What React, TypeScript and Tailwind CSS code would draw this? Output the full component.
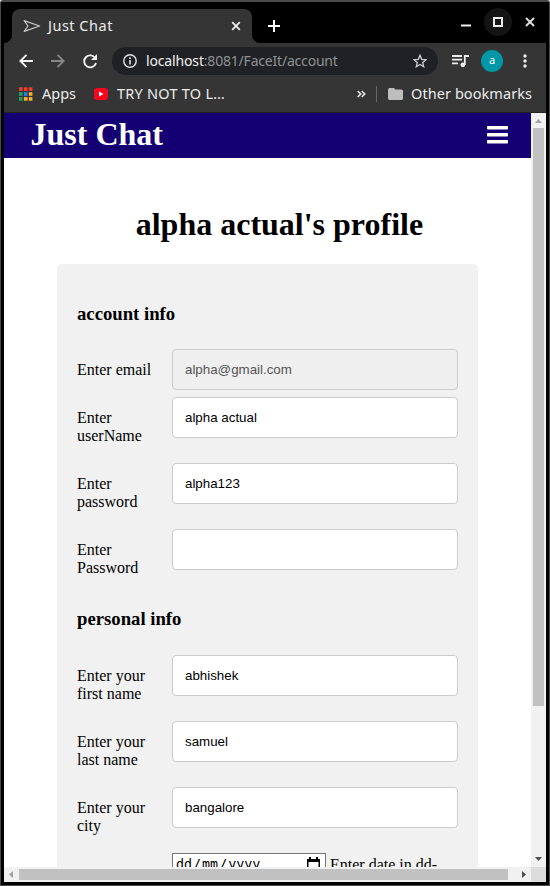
import React from "react";

const ui = "font-['Noto_Sans',sans-serif]";

function Field({ label, value, disabled }: { label: string[]; value: string; disabled?: boolean }) {
  return (
    <div className="flex pb-[6px]">
      <label className="w-[95px] shrink-0 py-3">
        {label.map((l) => (
          <span key={l} className="block whitespace-nowrap">{l}</span>
        ))}
      </label>
      <input
        readOnly
        disabled={disabled}
        defaultValue={value}
        className="h-[41px] w-[286px] rounded-[4px] border border-[#ccc] bg-white px-3 font-['Liberation_Sans',sans-serif] text-[13.333px] text-black outline-none disabled:bg-[#efefef] disabled:text-[#545454]"
      />
    </div>
  );
}

function TabStrip() {
  return (
    <div className="flex h-[41px] shrink-0 bg-black">
      <div className="flex w-2 items-end bg-[#353535]">
        <div className="h-full w-full rounded-br-[8px] bg-black" />
      </div>
      <div className="mt-[7px] flex w-[240px] items-center rounded-t-[8px] bg-[#353535] pl-[11px] pr-[11px]">
        <svg width="18" height="14" viewBox="0 0 18 14" fill="none" stroke="#c8c8c8" strokeWidth="1.2" strokeLinejoin="round">
          <path d="M1.200 1.600 16.600 7 1.200 12.400 5 7Z" />
        </svg>
        <span className="ml-[7px] flex-1 whitespace-nowrap text-[14.500px] tracking-[0.5px] text-[#ececec]">Just Chat</span>
        <svg width="10" height="10" viewBox="0 0 10 10" stroke="#eee" strokeWidth="1.8">
          <path d="m1.2 1.2 7.6 7.6m0-7.6-7.6 7.6" />
        </svg>
      </div>
      <div className="flex w-2 items-end bg-[#353535]">
        <div className="h-full w-full rounded-bl-[8px] bg-black" />
      </div>
      <svg className="ml-2 mt-[18px]" width="12" height="12" stroke="#fff" strokeWidth="2">
        <path d="M6 0v12M0 6h12" />
      </svg>
      <div className="flex flex-1 justify-end pr-[10px] pt-[6px]">
        <svg width="76" height="28" viewBox="0 0 76 28" fill="none">
          <path d="M1 17.5h10" stroke="#eee" strokeWidth="2" />
          <circle cx="38" cy="14" r="14" fill="#141414" />
          <rect x="34" y="10" width="8" height="8" stroke="#eee" strokeWidth="2" />
          <path d="m66 10 8 8m0-8-8 8" stroke="#ddd" strokeWidth="2" />
        </svg>
      </div>
    </div>
  );
}

function Toolbar() {
  return (
    <div className="flex h-[35px] shrink-0 items-center pt-px">
      <svg className="ml-[15px] shrink-0" width="79" height="16" viewBox="0 0 79 16" fill="none" strokeWidth="1.9">
        <path d="M14 8H1.5M7.5 1.8 1.4 8l6.1 6.2" stroke="#f4f4f4" />
        <path d="M32 8h12.500M38.500 1.800 44.600 8l-6.100 6.200" stroke="#868686" />
        <path d="M76.500 5.500A6 6 0 1 0 77 10" stroke="#f4f4f4" />
        <path d="M78 1v6h-6z" fill="#f4f4f4" />
      </svg>
      <div className="ml-[14px] flex h-[28px] w-[326px] items-center rounded-full bg-[#202124] pl-[11px] pr-[11px]">
        <svg width="14" height="14" viewBox="0 0 14 14" fill="none" stroke="#e4e4e4">
          <circle cx="7" cy="7" r="6.200" strokeWidth="1.400" />
          <path d="M7 6v4.500M7 3.200v1.800" strokeWidth="1.600" />
        </svg>
        <span className="ml-[9px] flex-1 whitespace-nowrap pb-px text-[14px] text-[#8f9194]">
          <span className="tracking-[-0.15px] text-[#f0f0f0]">localhost</span>
          <span className="tracking-[-0.2px]">:8081/FaceIt/account</span>
        </span>
        <svg width="14" height="14" viewBox="0 0 14 14" fill="none" stroke="#d0d0d0" strokeWidth="1.300">
          <path d="m7 1.300 1.700 4 4.300.4-3.300 2.800 1 4.200L7 10.500l-3.700 2.200 1-4.200L1 5.700l4.300-.4Z" />
        </svg>
      </div>
      <svg className="ml-[14px]" width="17" height="14" viewBox="0 0 17 14" fill="none" stroke="#eee" strokeWidth="1.800">
        <path d="M0 2h10M0 5.700h10M0 9.400h6M12.800 11V2H17" />
        <circle cx="10.900" cy="10.800" r="2.400" fill="#eee" stroke="none" />
      </svg>
      <div className="ml-[12px] flex size-[22px] items-center justify-center rounded-full bg-[#0097a7] pb-px text-[11px] text-white">a</div>
      <svg className="ml-[20px]" width="4" height="14" fill="#eee">
        <circle cx="2" cy="2" r="1.700" /><circle cx="2" cy="7" r="1.700" /><circle cx="2" cy="12" r="1.700" />
      </svg>
    </div>
  );
}

const appColors = ["#f33b32", "#f33b32", "#f33b32", "#1da462", "#1e88f5", "#fbb32c", "#1da462", "#fbb32c", "#fbb32c"];

function Bookmarks() {
  return (
    <div className="flex h-[35px] shrink-0 items-center whitespace-nowrap border-b border-[#222] pb-[2px] text-[14.500px] text-[#ececec]">
      <svg className="ml-[15px]" width="14" height="14">
        {appColors.map((c, i) => <rect key={i} x={(i % 3) * 4.9} y={Math.floor(i / 3) * 4.9 + 0.3} width="3.600" height="3.600" fill={c} />)}
      </svg>
      <span className="ml-[9px] w-[35px]">Apps</span>
      <svg className="ml-[17px]" width="14" height="12" viewBox="0 0 14 12">
        <rect width="14" height="12" rx="3" fill="#f6061d" /><path d="M5 3.500v5L9.500 6Z" fill="#fff" />
      </svg>
      <span className="ml-[9px] tracking-[0.25px]">TRY NOT TO L…</span>
      <div className="flex flex-1 items-center justify-end pr-[14px]">
        <svg width="9" height="8" viewBox="0 0 9 8" fill="none" stroke="#eee" strokeWidth="1.600"><path d="m.7 1 3 3-3 3M4.700 1l3 3-3 3" /></svg>
        <div className="ml-[10px] h-4 w-px bg-[#686868]" />
        <svg className="ml-[11px]" width="15" height="12" viewBox="0 0 15 12"><path d="M1.500 0H6l1.500 1.500h6A1.500 1.500 0 0 1 15 3v7.500a1.500 1.500 0 0 1-1.500 1.500h-12A1.500 1.500 0 0 1 0 10.500v-9A1.500 1.500 0 0 1 1.500 0Z" fill="#bdbdbd" /></svg>
        <span className="ml-[8px] w-[121px] tracking-[0.07px]">Other bookmarks</span>
      </div>
    </div>
  );
}

function Page() {
  return (
    <main className="flex h-[754px] w-[527px] flex-col overflow-hidden bg-white text-[16px] leading-[18px] text-black">
      <header className="flex h-[45px] shrink-0 items-center justify-between bg-[#140073] pl-[26.500px] pr-[23px] pb-[2px]">
        <h1 className="pb-px text-[32px] font-bold leading-[37px] text-white">Just Chat</h1>
        <svg width="21" height="18" fill="#fff"><rect width="21" height="3.600" rx=".8" /><rect y="7" width="21" height="3.600" rx=".8" /><rect y="14" width="21" height="3.600" rx=".8" /></svg>
      </header>
      <h2 className="ml-[131.700px] mt-[48px] shrink-0 text-[32px] font-bold leading-[37px]">alpha actual's profile</h2>
      <section className="ml-[53px] mt-[21px] w-[421px] shrink-0 rounded-[5px] bg-[#f1f1f1] px-5 pt-[39px]">
        <h3 className="mb-[24px] text-[18.720px] font-bold leading-[22px]">account info</h3>
        <Field label={["Enter email"]} value="alpha@gmail.com" disabled />
        <Field label={["Enter", "userName"]} value="alpha actual" />
        <Field label={["Enter", "password"]} value="alpha123" />
        <Field label={["Enter", "Password"]} value="" />
        <h3 className="mb-[25px] mt-[13px] text-[18.720px] font-bold leading-[22px]">personal info</h3>
        <Field label={["Enter your", "first name"]} value="abhishek" />
        <Field label={["Enter your", "last name"]} value="samuel" />
        <Field label={["Enter your", "city"]} value="bangalore" />
        <div className="ml-[95px] flex h-[60px] whitespace-nowrap">
          <div className="flex h-[22px] w-[154px] items-center justify-between border border-[#767676] bg-white pl-[3px] pr-[5px] font-['DejaVu_Sans_Mono',monospace] text-[13.333px]">
            <span className="pt-[2px]">dd<span className="px-px">/</span>mm<span className="px-px">/</span>yyyy</span>
            <svg width="13" height="14" viewBox="0 0 13 14"><path d="M0 2h2V0h2v2h5V0h2v2h2v12H0ZM1.500 5v7.500h10V5Z" fillRule="evenodd" /></svg>
          </div>
          <span className="ml-1 mt-[3px]">Enter date in dd-</span>
        </div>
      </section>
    </main>
  );
}

export default function App() {
  return (
    <div className="h-[886px] w-[550px] overflow-hidden bg-white">
      <div className="flex h-[886px] flex-col rounded-t-[3px] border-x border-b border-t-2 border-[#4a4a4a] bg-black">
        <div className={`mx-[3px] flex w-[542px] flex-col bg-[#353535] ${ui}`}>
          <TabStrip />
          <Toolbar />
          <Bookmarks />
        </div>
        <div className="ml-[3px] flex w-[542px] flex-wrap bg-[#f1f1f1] font-['Liberation_Serif',serif]">
          <Page />
          <div className="flex h-[754px] w-[15px] flex-col items-center">
            <svg className="mt-[6px]" width="7" height="4" fill="#a3a3a3"><path d="M0 4 3.500 0 7 4Z" /></svg>
            <div className="mt-[5px] h-[578px] w-[11px] bg-[#c1c1c1]" />
            <svg className="mb-[6px] mt-auto" width="7" height="4" fill="#505050"><path d="m0 0 3.500 4L7 0Z" /></svg>
          </div>
          <div className="flex h-[15px] w-[527px] items-center">
            <svg className="ml-[5px]" width="4" height="7" fill="#a3a3a3"><path d="M4 0v7L0 3.500Z" /></svg>
            <div className="ml-[6px] h-[11px] w-[489px] bg-[#c1c1c1]" />
            <svg className="ml-auto mr-[5px]" width="4" height="7" fill="#505050"><path d="M0 0v7l4-3.500Z" /></svg>
          </div>
          <div className="h-[15px] w-[15px] bg-[#dcdcdc]" />
        </div>
      </div>
    </div>
  );
}
